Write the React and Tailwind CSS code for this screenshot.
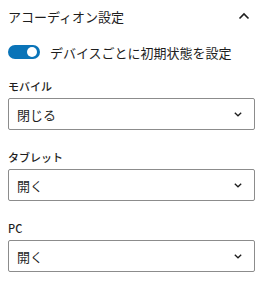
export default function App() {
  const selects = [
    { label: "モバイル", value: "閉じる" },
    { label: "タブレット", value: "開く" },
    { label: "PC", value: "開く" },
  ];

  return (
    <div
      className="w-[265px] h-[285px] bg-white text-[#1e1e1e]"
      style={{ fontFamily: '"Noto Sans CJK JP", "Noto Sans", sans-serif' }}
    >
      {/* Header */}
      <div className="flex items-center justify-between pl-2 pr-[15px] h-[32px]">
        <span className="text-[13px] leading-none">アコーディオン設定</span>
        <svg width="12" height="8" viewBox="0 0 12 8" fill="none">
          <path d="M1.5 6.5L6 2L10.5 6.5" stroke="#1e1e1e" strokeWidth="1.6" />
        </svg>
      </div>

      <div className="pl-2 pr-[10px] pt-[13px]">
        {/* Toggle */}
        <div className="flex items-center gap-[10px] h-[14px]">
          <span className="relative w-[32px] h-[14px] rounded-full bg-[#0a74b8] shrink-0">
            <span className="absolute right-[3px] top-[2px] w-[10px] h-[10px] rounded-full bg-white" />
          </span>
          <span className="text-[13px] leading-none">デバイスごとに初期状態を設定</span>
        </div>

        <div className="flex flex-col gap-[21px] mt-[21px]">
          {selects.map((s) => (
            <div key={s.label} className="flex flex-col gap-[6px]">
              <span className="text-[11px] font-medium leading-[12px] h-[12px]">{s.label}</span>
              <div className="h-[32px] border border-[#8c8c8c] rounded-[2px] flex items-center justify-between pl-2 pr-[12px]">
                <span className="text-[13px] leading-none">{s.value}</span>
                <svg width="8" height="5" viewBox="0 0 8 5" fill="none">
                  <path d="M0.8 0.8L4 3.8L7.2 0.8" stroke="#1e1e1e" strokeWidth="1.3" />
                </svg>
              </div>
            </div>
          ))}
        </div>
      </div>
    </div>
  );
}
